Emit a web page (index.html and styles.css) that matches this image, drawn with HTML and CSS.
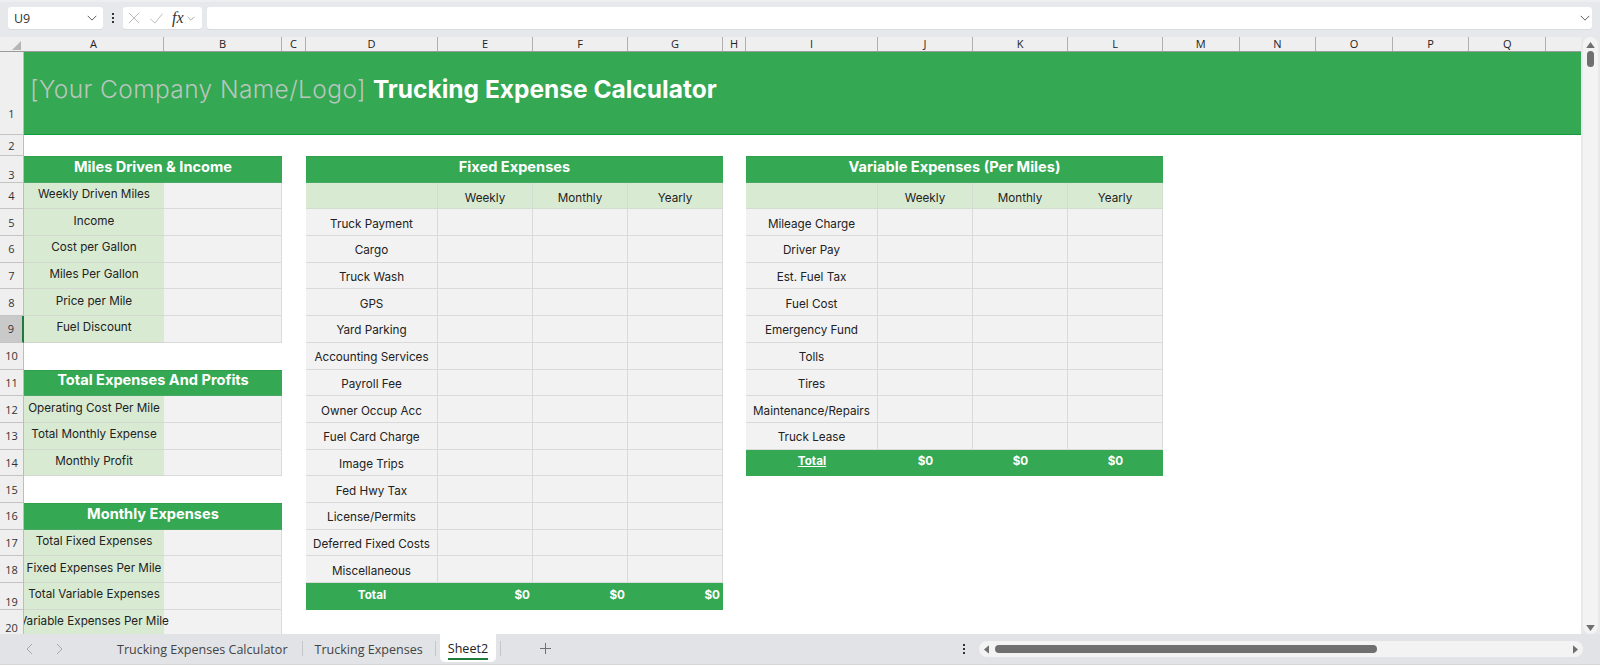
FILE: index.html
```html
<!DOCTYPE html>
<html lang="en">
<head>
<meta charset="utf-8">
<title>Trucking Expense Calculator</title>
<link rel="stylesheet" href="styles.css">
</head>
<body>
<div class="app">
  <div class="formula-bar">
    <div class="name-box"><span>U9</span>
      <svg class="chev" viewBox="0 0 14 8"><path d="M1 1l6 6 6-6"/></svg>
    </div>
    <div class="vdots"><i></i><i></i><i></i></div>
    <div class="fx-box">
      <svg class="fx-icon" viewBox="0 0 14 14"><path d="M1 1l12 12M13 1L1 13"/></svg>
      <svg class="fx-icon" viewBox="0 0 16 14"><path d="M1 8l5 5L15 2"/></svg>
      <span class="fx">fx</span>
      <svg class="chev small" viewBox="0 0 14 8"><path d="M1 1l6 6 6-6"/></svg>
    </div>
    <div class="formula-input">
      <svg class="chev" viewBox="0 0 14 8"><path d="M1 1l6 6 6-6"/></svg>
    </div>
  </div>

  <div class="work">
    <div class="sheet-wrap">
      <div class="col-head">
        <div class="corner"><svg viewBox="0 0 10 10"><path d="M10 0v10H0z"/></svg></div>
        <div class="c a">A</div><div class="c b">B</div><div class="c gut1">C</div><div class="c d">D</div>
        <div class="c e">E</div><div class="c e">F</div><div class="c g">G</div><div class="c gut2">H</div>
        <div class="c d">I</div><div class="c e">J</div><div class="c e">K</div><div class="c g">L</div>
        <div class="c m">M</div><div class="c m">N</div><div class="c m">O</div><div class="c m">P</div><div class="c m">Q</div>
      </div>
      <div class="grid-body">
        <div class="row-nums">
          <div class="rn r1 low">1</div><div class="rn r2">2</div><div class="rn low">3</div><div class="rn">4</div>
          <div class="rn">5</div><div class="rn">6</div><div class="rn">7</div><div class="rn">8</div>
          <div class="rn sel">9</div><div class="rn">10</div><div class="rn">11</div><div class="rn">12</div>
          <div class="rn">13</div><div class="rn">14</div><div class="rn">15</div><div class="rn">16</div>
          <div class="rn">17</div><div class="rn">18</div><div class="rn low">19</div><div class="rn low">20</div>
        </div>
        <div class="sheet">
          <div class="banner"><span class="company">[Your Company Name/Logo]</span> <strong class="brand">Trucking Expense Calculator</strong></div>
          <div class="panels">
            <div class="col-left">
              <section class="tbl t2">
                <h2 class="title">Miles Driven &amp; Income</h2>
                <div class="lab">Weekly Driven Miles</div><div class="val"></div>
                <div class="lab">Income</div><div class="val"></div>
                <div class="lab">Cost per Gallon</div><div class="val"></div>
                <div class="lab">Miles Per Gallon</div><div class="val"></div>
                <div class="lab">Price per Mile</div><div class="val"></div>
                <div class="lab">Fuel Discount</div><div class="val"></div>
              </section>
              <section class="tbl t2">
                <h2 class="title">Total Expenses And Profits</h2>
                <div class="lab">Operating Cost Per Mile</div><div class="val"></div>
                <div class="lab">Total Monthly Expense</div><div class="val"></div>
                <div class="lab">Monthly Profit</div><div class="val"></div>
              </section>
              <section class="tbl t2">
                <h2 class="title">Monthly Expenses</h2>
                <div class="lab">Total Fixed Expenses</div><div class="val"></div>
                <div class="lab">Fixed Expenses Per Mile</div><div class="val"></div>
                <div class="lab">Total Variable Expenses</div><div class="val"></div>
                <div class="lab">Variable Expenses Per Mile</div><div class="val"></div>
              </section>
            </div>

            <section class="tbl t4">
              <h2 class="title">Fixed Expenses</h2>
              <div class="hd"></div><div class="hd">Weekly</div><div class="hd">Monthly</div><div class="hd">Yearly</div>
              <div class="nm">Truck Payment</div><div class="val"></div><div class="val"></div><div class="val"></div>
              <div class="nm">Cargo</div><div class="val"></div><div class="val"></div><div class="val"></div>
              <div class="nm">Truck Wash</div><div class="val"></div><div class="val"></div><div class="val"></div>
              <div class="nm">GPS</div><div class="val"></div><div class="val"></div><div class="val"></div>
              <div class="nm">Yard Parking</div><div class="val"></div><div class="val"></div><div class="val"></div>
              <div class="nm">Accounting Services</div><div class="val"></div><div class="val"></div><div class="val"></div>
              <div class="nm">Payroll Fee</div><div class="val"></div><div class="val"></div><div class="val"></div>
              <div class="nm">Owner Occup Acc</div><div class="val"></div><div class="val"></div><div class="val"></div>
              <div class="nm">Fuel Card Charge</div><div class="val"></div><div class="val"></div><div class="val"></div>
              <div class="nm">Image Trips</div><div class="val"></div><div class="val"></div><div class="val"></div>
              <div class="nm">Fed Hwy Tax</div><div class="val"></div><div class="val"></div><div class="val"></div>
              <div class="nm">License/Permits</div><div class="val"></div><div class="val"></div><div class="val"></div>
              <div class="nm">Deferred Fixed Costs</div><div class="val"></div><div class="val"></div><div class="val"></div>
              <div class="nm">Miscellaneous</div><div class="val"></div><div class="val"></div><div class="val"></div>
              <div class="tot">Total</div><div class="tot right">$0</div><div class="tot right">$0</div><div class="tot right">$0</div>
            </section>

            <section class="tbl t4 second">
              <h2 class="title">Variable Expenses (Per Miles)</h2>
              <div class="hd"></div><div class="hd">Weekly</div><div class="hd">Monthly</div><div class="hd">Yearly</div>
              <div class="nm">Mileage Charge</div><div class="val"></div><div class="val"></div><div class="val"></div>
              <div class="nm">Driver Pay</div><div class="val"></div><div class="val"></div><div class="val"></div>
              <div class="nm">Est. Fuel Tax</div><div class="val"></div><div class="val"></div><div class="val"></div>
              <div class="nm">Fuel Cost</div><div class="val"></div><div class="val"></div><div class="val"></div>
              <div class="nm">Emergency Fund</div><div class="val"></div><div class="val"></div><div class="val"></div>
              <div class="nm">Tolls</div><div class="val"></div><div class="val"></div><div class="val"></div>
              <div class="nm">Tires</div><div class="val"></div><div class="val"></div><div class="val"></div>
              <div class="nm">Maintenance/Repairs</div><div class="val"></div><div class="val"></div><div class="val"></div>
              <div class="nm">Truck Lease</div><div class="val"></div><div class="val"></div><div class="val"></div>
              <div class="tot"><u>Total</u></div><div class="tot">$0</div><div class="tot">$0</div><div class="tot">$0</div>
            </section>
          </div>
        </div>
      </div>
    </div>
    <div class="vscroll">
      <svg class="arrow" viewBox="0 0 10 7"><path d="M5 0l5 7H0z"/></svg>
      <div class="vthumb"></div>
      <svg class="arrow bottom" viewBox="0 0 10 7"><path d="M0 0h10L5 7z"/></svg>
    </div>
  </div>

  <div class="tabbar">
    <div class="tab-nav">
      <svg viewBox="0 0 7 12"><path d="M6 1L1 6l5 5"/></svg>
      <svg viewBox="0 0 7 12"><path d="M1 1l5 5-5 5"/></svg>
    </div>
    <div class="tab t-first">Trucking Expenses Calculator</div>
    <div class="tab-sep"></div>
    <div class="tab">Trucking Expenses</div>
    <div class="tab-sep"></div>
    <div class="tab active"><span>Sheet2</span></div>
    <div class="tab-sep"></div>
    <svg class="plus" viewBox="0 0 12 12"><path d="M6 0v12M0 6h12"/></svg>
    <div class="vdots tab-dots"><i></i><i></i><i></i></div>
    <div class="hscroll">
      <svg class="harrow" viewBox="0 0 6 10"><path d="M6 0v10L0 5z"/></svg>
      <div class="hthumb"></div>
      <svg class="harrow end" viewBox="0 0 6 10"><path d="M0 0v10l6-5z"/></svg>
    </div>
  </div>
  <div class="foot"></div>
</div>
</body>
</html>
```

FILE: styles.css
```css
* { box-sizing: border-box; }
html, body { margin: 0; height: 100%; overflow: hidden; }
body { background: #fff; font-family: "Open Sans", "Liberation Sans", sans-serif; color: #222; }

.app { width: 1600px; height: 666px; display: flex; flex-direction: column; overflow: hidden; }

/* formula bar */
.formula-bar { height: 37px; flex: none; background: #e6e8eb; border-top: 2px solid #eceef0; display: flex; align-items: flex-start; padding: 5px 8px 0; }
.name-box, .fx-box, .formula-input { height: 22px; background: #fff; border-radius: 3px; display: flex; align-items: center; box-shadow: 0 1px 0 #d8dade; }
.name-box { width: 95px; padding: 0 6px 0 6px; justify-content: space-between; font-size: 12.5px; color: #333; }
.chev { width: 10px; height: 6px; fill: none; stroke: #444; stroke-width: 1.2; }
.chev.small { width: 8px; height: 5px; stroke: #888; }
.vdots { width: 20px; height: 22px; display: flex; flex-direction: column; align-items: center; justify-content: center; gap: 2px; flex: none; }
.vdots i { width: 2px; height: 2px; background: #333; display: block; }
.fx-box { width: 79px; padding: 0 4px 0 5px; gap: 0; }
.fx-icon { fill: none; stroke: #b9b9b9; stroke-width: 1.1; width: 12px; height: 12px; margin-right: 9px; flex: none; }
.fx-icon + .fx-icon { width: 15px; margin-right: 8px; }
.fx { font-family: "Liberation Serif", serif; font-style: italic; font-size: 16px; color: #333; width: 15px; line-height: 20px; }
.formula-input { flex: 1; margin-left: 5px; justify-content: flex-end; padding-right: 2px; }

/* work area */
.work { flex: none; height: 597px; display: flex; overflow: hidden; }
.sheet-wrap { width: 1581px; flex: none; background: #fff; overflow: hidden; }
.vscroll { flex: 1; background: #e6e8eb; position: relative; display: flex; flex-direction: column; align-items: center; padding-top: 1px; }
.vscroll::before { content: ""; position: absolute; left: 2px; right: 2px; top: 0; bottom: 0; background: #f3f3f4; border-radius: 8px; }
.arrow { width: 9px; height: 6px; fill: #6f6f6f; position: relative; margin-top: 4px; flex: none; }
.vthumb { width: 7px; height: 16px; background: #6f6f6f; border-radius: 4px; margin-top: 3px; position: relative; }
.arrow.bottom { margin-top: auto; margin-bottom: 3px; }

.col-head { height: 15px; display: flex; background: #efefef; border-bottom: 1px solid #9a9a9a; }
.corner { width: 24px; flex: none; background: #efefef; display: flex; justify-content: flex-end; align-items: flex-end; padding: 0 3px 1px 0; }
.corner svg { width: 9px; height: 9px; fill: #b5b5b5; }
.c { flex: none; text-align: center; font-size: 11px; line-height: 14px; color: #222; border-right: 1px solid #b0b0b0; }
.a { width: 140px; } .b { width: 118px; } .gut1 { width: 24px; } .d { width: 132px; }
.e { width: 95px; } .g { width: 95px; } .gut2 { width: 23px; } .m { width: 76.6px; }

.grid-body { display: flex; height: 582px; overflow: hidden; }
.row-nums { width: 24px; flex: none; background: #efefef; border-right: 1px solid #bdbdbd; }
.rn { height: 26.7px; font-size: 11px; color: #333; display: flex; align-items: center; justify-content: center; border-bottom: 1px solid #c4c4c4; }
.rn.r1 { height: 83px; }
.rn.r2 { height: 21px; }
.rn.low { align-items: flex-end; padding-bottom: 0; }
.rn.r1.low { padding-bottom: 13px; }
.rn.sel { background: #c9c9c9; border-right: 2px solid #1f7a3e; width: 24px; }

.sheet { width: 1557px; flex: none; overflow: hidden; font-family: "Inter", "Liberation Sans", sans-serif; }
.banner { height: 83px; background: #34a853; border-bottom: 1px solid #129c3e; padding: 20px 0 0 6px; line-height: 34px; font-size: 24.5px; white-space: nowrap; }
.company { color: #b9c6bd; font-weight: 300; letter-spacing: 0.4px; }
.brand { color: #fff; font-weight: 700; }

.panels { display: flex; margin-top: 21px; align-items: flex-start; }
.col-left { width: 258px; flex: none; display: flex; flex-direction: column; gap: 26.7px; overflow: hidden; }
.tbl { display: grid; grid-auto-rows: 26.7px; flex: none; }
.t2 { grid-template-columns: 140px 118px; }
.t4 { grid-template-columns: 132px 95px 95px 95px; width: 417px; margin-left: 24px; }
.t4.second { margin-left: 23px; }

.title { grid-column: 1 / -1; margin: 0; background: #34a853; color: #fff; font-size: 14.6px; font-weight: 700; display: flex; align-items: center; justify-content: center; padding-bottom: 5px; border-bottom: 1px solid #4aa866; border-top: 1px solid #2f9f4c; }
.lab, .nm, .hd, .val, .tot { display: flex; align-items: center; justify-content: center; font-size: 11.7px; white-space: nowrap; color: #222; }
.lab { background: #d9ead3; border-bottom: 1px solid #d2d8d0; padding-bottom: 3px; position: relative; z-index: 1; }
.val { background: #f2f2f2; border-right: 1px solid #dadada; border-bottom: 1px solid #dadada; }
.nm { background: #f2f2f2; border-right: 1px solid #dadada; border-bottom: 1px solid #dadada; padding-top: 3px; }
.hd { background: #d9ead3; border-right: 1px solid #d2dccf; border-bottom: 1px solid #d2dccf; padding-top: 4px; }
.tot { background: #34a853; color: #fff; font-weight: 700; padding-bottom: 3px; }
.tot.right { justify-content: flex-end; padding-right: 3px; }

/* tab bar */
.tabbar { height: 30px; flex: none; background: #e1e3e6; display: flex; align-items: stretch; font-size: 12.55px; color: #444; position: relative; }
.tab-nav { width: 117px; flex: none; display: flex; align-items: center; padding-left: 26px; gap: 23px; }
.tab-nav svg { width: 7px; height: 12px; fill: none; stroke: #a8a8a8; stroke-width: 1; }
.tab { display: flex; align-items: center; white-space: nowrap; padding: 0 12px; height: 28px; padding-top: 2px; }
.t-first { padding: 2px 14px 0 0; }
.tab-sep { width: 1px; height: 15px; background: #c4c6c9; margin-top: 7px; flex: none; }
.tab.active { background: #fff; border-radius: 0 0 5px 5px; margin: 0 4px; padding: 0 8px; color: #222; }
.tab.active span { border-bottom: 2px solid #1e7b3c; line-height: 18px; margin-top: 3px; }
.plus { width: 11px; height: 11px; stroke: #666; stroke-width: 1; fill: none; margin: 9px 0 0 39px; flex: none; }
.tab-dots { position: absolute; left: 954px; top: 4px; }
.hscroll { position: absolute; left: 979px; top: 7px; width: 604px; height: 16px; background: #f3f3f4; border-radius: 8px; display: flex; align-items: center; padding: 0 5px; }
.harrow { width: 5px; height: 9px; fill: #6f6f6f; flex: none; }
.harrow.end { margin-left: auto; }
.hthumb { width: 382px; height: 8px; background: #6f6f6f; border-radius: 4px; margin-left: 6px; }
.foot { flex: 1; background: #fff; border-top: 1px solid #d4d6d9; }
```
